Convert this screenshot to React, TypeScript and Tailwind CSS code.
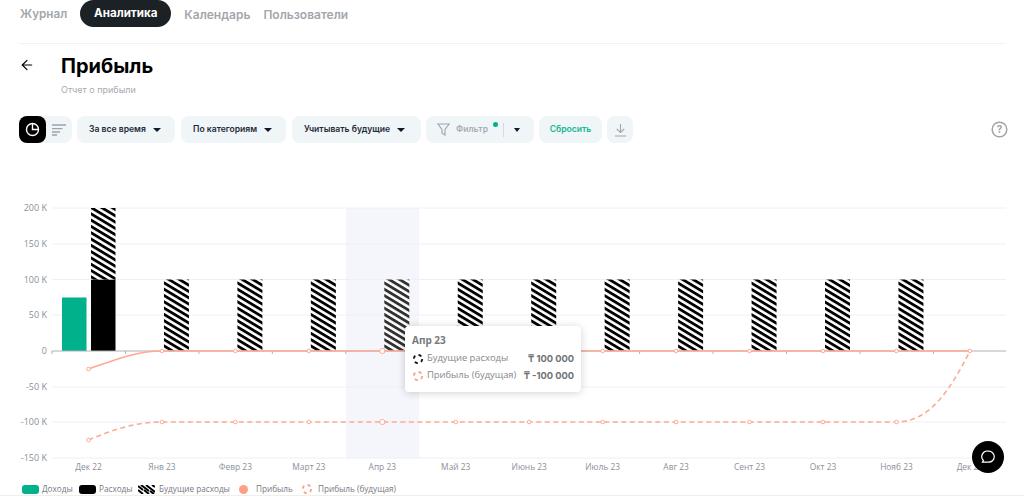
import { ArrowLeft } from "lucide-react";

const months = ["Дек 22", "Янв 23", "Февр 23", "Март 23", "Апр 23", "Май 23", "Июнь 23", "Июль 23", "Авг 23", "Сент 23", "Окт 23", "Нояб 23", "Дек 23"];
const ticks = [
  { label: "200 K", y: 208 },
  { label: "150 K", y: 244 },
  { label: "100 K", y: 279.5 },
  { label: "50 K", y: 315 },
  { label: "-50 K", y: 387 },
  { label: "-100 K", y: 422 },
  { label: "-150 K", y: 458 },
];
const X0 = 88.5;
const STEP = 73.45;
const SALMON = "#ffa993";

function Caret() {
  return <span className="ml-[7px] h-0 w-0 border-x-[4px] border-t-[4px] border-x-transparent border-t-[#111827]" />;
}

function DropButton({ label, width }: { label: string; width: string }) {
  return (
    <button className={`flex h-[27px] items-center rounded-lg bg-[#f0f5f8] pl-[12px] text-[8.6px] font-semibold text-[#1f2937] ${width}`}>
      {label}
      <Caret />
    </button>
  );
}

function LegendRing({ color }: { color: string }) {
  return (
    <svg width="12" height="12" viewBox="0 0 12 12" className="shrink-0">
      <circle cx="6" cy="6" r="4.2" fill="none" stroke={color} strokeWidth="1.8" strokeDasharray="3.2 3.4" />
    </svg>
  );
}

function Chart() {
  return (
    <svg width="1024" height="322" viewBox="0 152 1024 322" className="block" style={{ fontFamily: "'Open Sans', sans-serif" }}>
      <defs>
        <pattern id="hatch" width="100" height="5.4" patternUnits="userSpaceOnUse" patternTransform="rotate(31)">
          <rect width="100" height="5.4" fill="#fff" />
          <rect width="100" height="2.8" fill="#000" />
        </pattern>
      </defs>
      <rect x="346" y="208" width="73" height="250" fill="#f5f6fb" />
      {ticks.map((t) => (
        <g key={t.label}>
          <line x1="52" x2="1006" y1={t.y} y2={t.y} stroke="#eef0f7" />
          <text x="47" y={t.y + 3} textAnchor="end" fontSize="9" fill="#8b8f99">{t.label}</text>
        </g>
      ))}
      <text x="47" y="354" textAnchor="end" fontSize="9" fill="#8b8f99">0</text>

      <rect x="62" y="297.5" width="24.5" height="53.5" fill="#00b18b" />
      <rect x="91" y="279.5" width="24.5" height="71.5" fill="#000" />
      <rect x="91" y="208" width="24.5" height="71.5" fill="url(#hatch)" />
      {months.slice(1, 12).map((m, i) => (
        <rect key={m} x={X0 + STEP * (i + 1) + 2} y="279.5" width="25" height="71.5" fill="url(#hatch)" opacity={i === 3 ? 0.8 : 1} />
      ))}

      <line x1="52" x2="1006" y1="351" y2="351" stroke="#aeb1b8" />
      {months.map((m, i) => (
        <line key={m} x1={52 + STEP * i} x2={52 + STEP * i} y1="351" y2="354" stroke="#aeb1b8" />
      ))}

      <path d="M88.5 369 C112 361 135 351 162 351 L970 351" fill="none" stroke={SALMON} strokeWidth="1.6" />
      <path d="M88.5 440 C112 430 135 422 162 422 L896 422 C930 422 950 390 970 351" fill="none" stroke={SALMON} strokeWidth="1.6" strokeDasharray="5 3.5" />
      {months.map((m, i) => (
        <g key={m}>
          {i === 0 ? (
            <circle cx={X0} cy="369" r="1.8" fill="#fff" stroke={SALMON} />
          ) : (
            <circle cx={X0 + STEP * i} cy="351" r={i === 4 ? 2.6 : 1.8} fill="#fff" stroke={SALMON} />
          )}
          {i === 0 ? (
            <circle cx={X0} cy="440" r="1.8" fill="#fff" stroke={SALMON} />
          ) : i < 12 ? (
            <circle cx={X0 + STEP * i} cy="422" r={i === 4 ? 2.6 : 1.8} fill="#fff" stroke={SALMON} />
          ) : null}
          <text x={X0 + STEP * i} y="470" textAnchor="middle" fontSize="8.4" fill="#8b8f99">{m}</text>
        </g>
      ))}
    </svg>
  );
}

export default function App() {
  return (
    <div className="relative h-[496px] w-[1024px] overflow-hidden bg-white font-['Inter',sans-serif]">
      <nav className="mx-[19px] flex h-[44px] items-start border-b border-[#f1f2f4]">
        <a className="ml-px mt-[6px] text-[11.75px] font-semibold text-[#a3a6ab]">Журнал</a>
        <a className="ml-[13px] flex h-[27px] w-[91px] items-center justify-center rounded-full bg-[#1b2124] text-[11.6px] font-bold text-white">Аналитика</a>
        <a className="ml-[13px] mt-[6px] text-[12px] font-semibold text-[#a3a6ab]">Календарь</a>
        <a className="ml-[13px] mt-[6px] text-[12px] font-semibold text-[#a3a6ab]">Пользователи</a>
      </nav>

      <div className="mt-[8px] flex pl-[19px]">
        <ArrowLeft className="mt-[5px] h-4 w-4 text-black" strokeWidth={1.8} />
        <div className="ml-[26px]">
          <h1 className="text-[20px] leading-[28px] font-bold text-black">Прибыль</h1>
          <p className="mt-[4px] text-[9px] leading-[12px] text-[#a7aab0]">Отчет о прибыли</p>
        </div>
      </div>

      <div className="mt-[20px] flex items-center pl-[19px] pr-[16px]">
        <div className="flex h-[27px] w-[53px] rounded-lg bg-[#f0f5f8]">
          <span className="flex h-[27px] w-[27px] items-center justify-center rounded-lg bg-black">
            <svg width="15" height="15" viewBox="0 0 15 15" fill="none" stroke="#fff" strokeWidth="1.4">
              <circle cx="7.5" cy="7.5" r="6" />
              <path d="M7.5 1.500v6h6" />
            </svg>
          </span>
          <span className="flex flex-1 items-center justify-center">
            <svg width="14" height="12" viewBox="0 0 14 12" stroke="#9ca3a9" strokeWidth="1.3">
              <path d="M0 1h14M0 4.600h10.500M0 8h8M0 11h5" />
            </svg>
          </span>
        </div>
        <div className="ml-[5px] flex gap-[6px]">
          <DropButton label="За все время" width="w-[98px]" />
          <DropButton label="По категориям" width="w-[105px]" />
          <DropButton label="Учитывать будущие" width="w-[129px]" />
        </div>
        <div className="ml-[5px] flex h-[27px] w-[108px] items-center rounded-lg bg-[#f0f5f8] pl-[11px]">
          <svg width="13" height="13" viewBox="0 0 13 13" fill="none" stroke="#9ca3a9" strokeWidth="1.1">
            <path d="M.8 1h11.400L8 6.500V12L5 10.200V6.500z" />
          </svg>
          <span className="ml-[6px] text-[8.6px] font-semibold text-[#a9adb2]">Фильтр</span>
          <span className="relative -top-[5px] ml-[5px] h-[5px] w-[5px] rounded-full bg-[#00b18b]" />
          <span className="ml-[5px] h-[14px] w-px bg-[#d5d9dd]" />
          <span className="ml-[10px] h-0 w-0 border-x-[3.500px] border-t-[4px] border-x-transparent border-t-[#111827]" />
        </div>
        <button className="ml-[5px] h-[27px] w-[63px] rounded-lg bg-[#f0f5f8] text-[8.6px] font-semibold text-[#14b892]">Сбросить</button>
        <button className="ml-[5px] flex h-[27px] w-[26px] items-center justify-center rounded-lg bg-[#f0f5f8]">
          <svg width="13" height="14" viewBox="0 0 13 14" fill="none" stroke="#a1a6ab" strokeWidth="1.1">
            <path d="M6.500 1v8.500M2.800 6l3.700 3.500L10.200 6M1 13h11" />
          </svg>
        </button>
        <svg width="17" height="17" viewBox="0 0 17 17" fill="none" className="ml-auto">
          <circle cx="8.500" cy="8.500" r="7.300" stroke="#a1a4a8" strokeWidth="1.500" />
          <text x="8.500" y="12" textAnchor="middle" fontSize="10" fontWeight="700" fill="#a1a4a8">?</text>
        </svg>
      </div>

      <div className="mt-[9px]">
        <Chart />
      </div>

      <div className="mt-[9px] flex items-center pl-[22px] font-['Open_Sans',sans-serif] text-[8.2px] text-[#77797f]">
        <span className="h-[9px] w-[17px] rounded-[3px] bg-[#00b18b]" />
        <span className="ml-[3px] w-[37px]">Доходы</span>
        <span className="h-[9px] w-[17px] rounded-[3px] bg-black" />
        <span className="ml-[3px] w-[39px]">Расходы</span>
        <svg width="17" height="9" viewBox="0 0 17 9">
          <path d="M0 1l5 4M3 0l8 6M8 0l9 7M14 0l3 2M0 5l5 4M6 5l5 4M12 6l4 3" stroke="#000" strokeWidth="2" />
        </svg>
        <span className="ml-[4px] w-[80px]">Будущие расходы</span>
        <span className="h-[9px] w-[9px] rounded-full bg-[#ff9f87]" />
        <span className="ml-[8px] w-[45px]">Прибыль</span>
        <LegendRing color="#ff9f87" />
        <span className="ml-[5px]">Прибыль (будущая)</span>
      </div>

      <div className="absolute left-[405px] top-[326px] h-[66px] w-[176px] rounded bg-white px-[7px] pt-[7px] font-['Open_Sans',sans-serif] shadow-[0_1px_8px_rgba(0,0,0,0.18)]">
        <div className="text-[10px] leading-[14px] font-bold text-[#77797e]">Апр 23</div>
        <div className="mt-[3px] flex h-[17px] items-center text-[9.4px]">
          <LegendRing color="#111" />
          <span className="ml-[3px] text-[#85878c]">Будущие расходы</span>
          <span className="ml-auto font-['Inter',sans-serif] text-[9.3px] font-bold text-[#6f7176]">₸ 100 000</span>
        </div>
        <div className="flex h-[17px] items-center text-[9.4px]">
          <LegendRing color="#ff9f87" />
          <span className="ml-[3px] text-[#85878c]">Прибыль (будущая)</span>
          <span className="ml-auto font-['Inter',sans-serif] text-[9.3px] font-bold text-[#6f7176]">₸ -100 000</span>
        </div>
      </div>

      <button className="absolute left-[972px] top-[441px] flex h-8 w-8 items-center justify-center rounded-full bg-black">
        <svg width="16" height="16" viewBox="0 0 16 16" fill="none" stroke="#fff" strokeWidth="1.200">
          <path d="M8.600 2.200a5.500 5.500 0 0 1 .3 11H2.400l1-1.800a5.500 5.500 0 0 1 5.200-9.200z" />
        </svg>
      </button>
      <div className="absolute bottom-0 left-0 h-px w-full bg-[#eef0e8]" />
    </div>
  );
}
